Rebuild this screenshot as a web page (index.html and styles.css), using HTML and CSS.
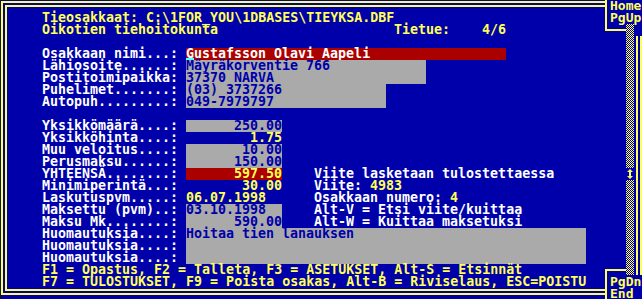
FILE: index.html
```html
<!DOCTYPE html>
<html>
<head>
  <meta charset="utf-8">
  <title>Tieosakkaat</title>
  <link rel="stylesheet" href="styles.css">
</head>
<body>
  <div class="screen">
    <div class="frame">
      <div class="row title">Tieosakkaat: C:\1FOR_YOU\1DBASES\TIEYKSA.DBF</div>
      <div class="row title"><span class="c44">Oikotien tiehoitokunta</span><span>Tietue:    4/6</span></div>
      <div class="row"></div>
      <div class="row"><span class="lbl">Osakkaan nimi...:</span><span class="fld red w40"><span class="cur">G</span>ustafsson Olavi Aapeli</span></div>
      <div class="row"><span class="lbl">Lähiosoite......:</span><span class="fld gray w30">Mäyräkorventie 766</span></div>
      <div class="row"><span class="lbl">Postitoimipaikka:</span><span class="fld gray w30">37370 NARVA</span></div>
      <div class="row"><span class="lbl">Puhelimet.......:</span><span class="fld gray w25">(03) 3737266</span></div>
      <div class="row"><span class="lbl">Autopuh.........:</span><span class="fld gray w25">049-7979797</span></div>
      <div class="row"></div>
      <div class="row"><span class="lbl">Yksikkömäärä....:</span><span class="fld gray w12 num">250.00</span></div>
      <div class="row"><span class="lbl">Yksikköhinta....:</span><span class="fld yel w12 num">1.75</span></div>
      <div class="row"><span class="lbl">Muu veloitus....:</span><span class="fld gray w12 num">10.00</span></div>
      <div class="row"><span class="lbl">Perusmaksu......:</span><span class="fld gray w12 num">150.00</span></div>
      <div class="row"><span class="lbl">YHTEENSÄ........:</span><span class="fld total w12 num">597.50</span><span class="note">Viite lasketaan tulostettaessa</span></div>
      <div class="row"><span class="lbl">Minimiperintä...:</span><span class="fld yel w12 num">30.00</span><span class="note">Viite: <span class="yel">4983</span></span></div>
      <div class="row"><span class="lbl">Laskutuspvm.....:</span><span class="fld yel w12">06.07.1998</span><span class="note">Osakkaan numero: <span class="yel">4</span></span></div>
      <div class="row"><span class="lbl">Maksettu (pvm)..:</span><span class="fld gray w12">03.10.1998</span><span class="note">Alt-V = Etsi viite/kuittaa</span></div>
      <div class="row"><span class="lbl">Maksu Mk........:</span><span class="fld gray w12 num">590.00</span><span class="note">Alt-W = Kuittaa maksetuksi</span></div>
      <div class="row"><span class="lbl">Huomautuksia....:</span><span class="fld gray w50">Hoitaa tien lanauksen</span></div>
      <div class="row"><span class="lbl">Huomautuksia....:</span><span class="fld gray w50"></span></div>
      <div class="row"><span class="lbl">Huomautuksia....:</span><span class="fld gray w50"></span></div>
      <div class="row title">F1 = Opastus, F2 = Talleta, F3 = ASETUKSET, Alt-S = Etsinnät</div>
      <div class="row title">F7 = TULOSTUKSET, F9 = Poista osakas, Alt-B = Riviselaus, ESC=POISTU</div>
    </div>

    <div class="side">
      <div class="key">Home
PgUp</div>
      <div class="mid">
        <div class="mid-left">
          <div class="cap-top"></div>
          <div class="cap-bottom"></div>
        </div>
        <div class="track">
          <div class="checker upper"></div>
          <div class="thumb">
            <svg width="8" height="12" viewBox="0 0 8 12"><polygon points="4,1 7,4 5,4 5,8 7,8 4,11 1,8 3,8 3,4 1,4" fill="#ffff55"/></svg>
          </div>
          <div class="checker lower"></div>
        </div>
        <div class="rails"></div>
      </div>
      <div class="key key-bottom">PgDn
End</div>
    </div>
  </div>
</body>
</html>
```

FILE: styles.css
```css
* {
  box-sizing: border-box;
}

html, body {
  margin: 0;
  padding: 0;
  background: #0000aa;
}

.screen {
  width: 642px;
  height: 299px;
  display: flex;
  overflow: hidden;
  border-left: 1px solid #14141c;
  background: #0000aa;
  color: #ffffff;
  font-family: "DejaVu Sans Mono", "Liberation Mono", monospace;
  font-size: 13.3px;
  font-weight: bold;
  line-height: 12px;
}

/* main window with the double frame */
.frame {
  flex: 0 0 604px;
  height: 294px;
  margin-top: 1px;
  border: 6px double #ffff55;
  border-right: none;
  padding: 5px 0 1px 35px;
}

.row {
  height: 12px;
  display: flex;
  white-space: pre;
}

.title { color: #ffff55; }
.c44 { width: 352px; }
.lbl { width: 144px; flex-shrink: 0; }

.fld { height: 12px; flex-shrink: 0; }
.w12 { width: 96px; }
.w25 { width: 200px; }
.w30 { width: 240px; }
.w40 { width: 320px; }
.w50 { width: 400px; }
.num { text-align: right; }

.gray { background: #aaaaaa; color: #0000aa; }
.red { background: #aa0000; color: #ffffff; }
.total { background: #aa0000; color: #ffff55; }
.yel { color: #ffff55; }

.cur {
  display: inline-block;
  height: 12px;
  box-shadow: inset 0 -2px #55ffff;
}

.note {
  margin-left: 32px;
  color: #ffffff;
}

/* right side: key boxes and scroll bar */
.side {
  flex: 0 0 37px;
  display: flex;
  flex-direction: column;
  color: #ffff55;
}

.key {
  height: 24px;
  border-left: 2px solid #ffff55;
  padding-left: 3px;
  font-size: 13px;
  letter-spacing: 0;
  white-space: pre;
}

.key-bottom {
  padding-top: 1px;
}

.mid {
  flex: 1;
  display: flex;
}

.mid-left {
  width: 21px;
  display: flex;
  flex-direction: column;
  justify-content: space-between;
}

.cap-top {
  height: 7px;
  border-left: 2px solid #ffff55;
  border-bottom: 2px solid #ffff55;
}

.cap-bottom {
  height: 6px;
  border-left: 2px solid #ffff55;
  border-top: 2px solid #ffff55;
}

.track {
  width: 8px;
  display: flex;
  flex-direction: column;
}

.checker {
  background: repeating-conic-gradient(#ffff55 0 25%, #0000aa 0 50%) 0 0 / 2px 2px;
}

.upper { height: 144px; }
.lower { flex: 1; }

.thumb {
  height: 12px;
  display: flex;
}

.rails {
  width: 6px;
  margin-left: 2px;
  margin-top: 12px;
  border-left: 6px double #ffff55;
}
```
